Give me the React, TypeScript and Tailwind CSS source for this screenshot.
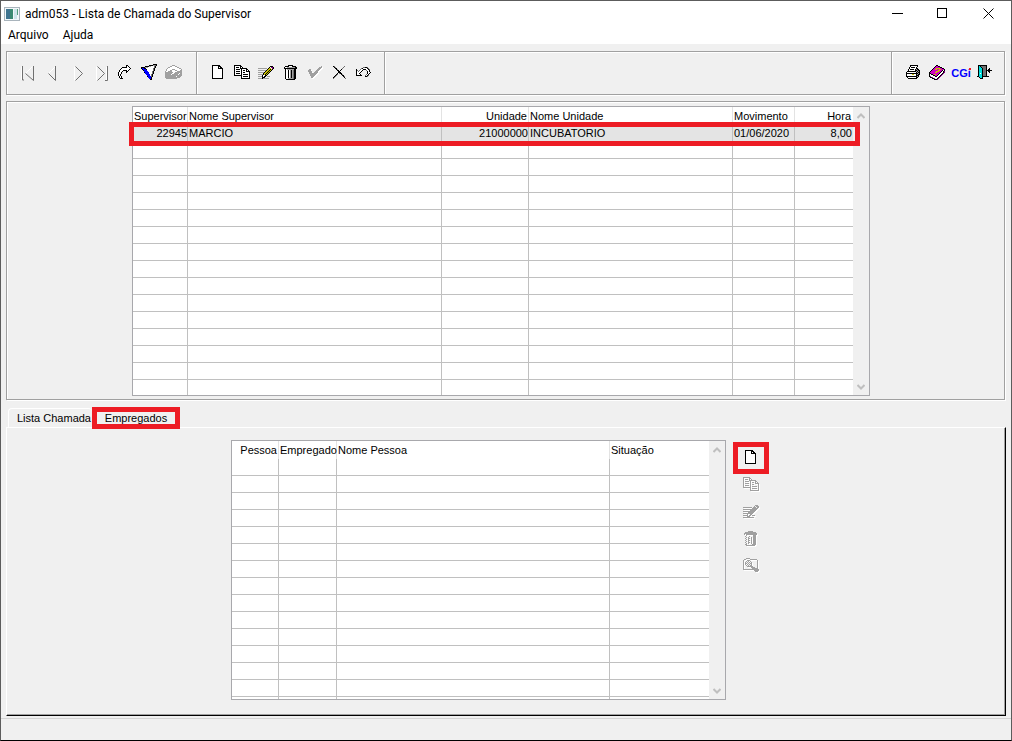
import type { ReactNode } from 'react'

const palette: Record<string, string> = {
  k: '#000000',
  w: '#ffffff',
  a: '#a0a0a0',
  g: '#707070',
  b: '#0000ff',
  y: '#c8c000',
  p: '#800080',
  m: '#d000c0',
  c: '#00e0e0'
}

const pageIcon = [
  'kkkkkkkk...',
  'kwwwwwkkk..',
  'kwwwwwkwkk.',
  'kwwwwwkkkkk',
  'kwwwwwwwwwk',
  'kwwwwwwwwwk',
  'kwwwwwwwwwk',
  'kwwwwwwwwwk',
  'kwwwwwwwwwk',
  'kwwwwwwwwwk',
  'kwwwwwwwwwk',
  'kwwwwwwwwwk',
  'kwwwwwwwwwk',
  'kkkkkkkkkkk'
]

const copyIcon = [
  'kkkkkkk.........',
  'kwwwwwkk........',
  'kwkkkwkwk.......',
  'kwwwwwkkkkkkk...',
  'kwkkkkwkwwwwkk..',
  'kwwwwwwkwkkwkwk.',
  'kwkkkkwkwwwwkkkk',
  'kwwwwwwkwkkwwwwk',
  'kwkkkkwkwwwwwwwk',
  'kwwwwwwkwkkkkkwk',
  'kkkkkkkkwwwwwwwk',
  '.......kwkkkkkwk',
  '.......kwwwwwwwk',
  '.......kkkkkkkkk'
]

const editIcon = [
  '............kkk.',
  '...........kwppk',
  'aaaaaaaaa.kyywpk',
  '.........kyykyk.',
  'aaaaaaaakyykyk..',
  '.......kyykyk...',
  'aaaaaakyykyk....',
  '.....kyykyk.....',
  'aaaaakykyk......',
  '....kwwkk.......',
  'aaaakwkk.aaa....',
  '....kkk.........',
  'aaaakaaaaaa.....'
]

const trashIcon = [
  '....kkkkk....',
  '.kkkkwwwkkkk.',
  'kwwaaaaaaaakk',
  'kkkkkkkkkkkkk',
  '.kwaaaaaaakk.',
  '.kwwkwakagkk.',
  '.kwwkwakagkk.',
  '.kwwkwakagkk.',
  '.kwwkwakagkk.',
  '.kwwkwakagkk.',
  '.kwwkwakagkk.',
  '.kwwkwakagkk.',
  '.kwwkwakagkk.',
  '.kwwaaaaagkk.',
  '..kkkkkkkkk..'
]

const trashOffIcon = [
  '....aaaaa....',
  '.aaaaaaaaaaa.',
  'aaaaaaaaaaaaa',
  'a.aaaaaaaaaaa',
  '..awwwwwwaaa.',
  '.a.wwawwwaaa.',
  '..awawwawaaa.',
  '.a.waawawaaa.',
  '..awawwawaaa.',
  '.a.waawawaaa.',
  '..awawwawaaa.',
  '.a.waawawaaa.',
  '..awawwawaaa.',
  '.aawwwwwaaaa.',
  '..aaaaaaaaa..'
]

const redoIcon = [
  '........kk...',
  '........kwk..',
  '....kkkkkwwk.',
  '...kwwwwwwwwk',
  '..kwwwwwwwwk.',
  '.kwwwkkkkwk..',
  '.kwwk...kk...',
  'kwwk....k....',
  'kwwk.........',
  'kwk..........',
  'kwk..........',
  '.kwk.........',
  '.kwk.........',
  '..kkk........'
]

const filterIcon = [
  '............kkkk',
  '........kkkkaagk',
  '....kkkkaawwwgk.',
  'kkkkaaawwwwwwgk.',
  'kbbkkwwwwwwwgk..',
  '.kbbbkwwwwwwgk..',
  '..kbbbwwwwwwgk..',
  '...bbbbwwwwgk...',
  '...kbbbbwwwgk...',
  '....bbbbwwwgk...',
  '.....bbbbwgk....',
  '......bbbwgk....',
  '......kbbbgk....',
  '.......bbbk.....',
  '........bbk.....',
  '.........kk.....'
]

const boxIcon = [
  '.......aaa.......',
  '.....aawwwaa.....',
  '...aawwwwwwwaa...',
  '..awwwwwwwwwwwaa.',
  '.awwwwwaaawwwwwwa',
  '.awwwaawwwaawwwaa',
  'awwaaaawwwwwaaaaa',
  'aaaaaaaawwaaaaaaa',
  'aaaaaaawwaaaaawaa',
  'aaaaaawaaaaaawaaa',
  'aaaaaaaaaaaaaaaaa',
  'aaaaaaaaaaawaaaa.',
  'aaaaaaaaaaaaaaa..',
  '.aaaaaaaaaaa.....'
]

const checkIcon = [
  '.............a',
  '...........aaa',
  '..........aaa.',
  '.aa......aaa..',
  'aaa.....aaa...',
  'aaaa...aaa....',
  '.aaa..aaaa....',
  '.aaaaaaaa.....',
  '..aaaaaa......',
  '..aaaaa.......',
  '...aaa........',
  '...aa.........'
]

const cancelIcon = [
  'kg.........g.',
  '.kg.......g..',
  '..kk.....g...',
  '...kg...k....',
  '....kk.k.....',
  '.....kk......',
  '.....kkk.....',
  '....k.gkk....',
  '...kg...kg...',
  '..kg.....kk..',
  '.kg.......kg.',
  'kg.........k.',
  'g...........g'
]

const undoIcon = [
  '.......ggkkg...',
  '.....gkwwwwkg..',
  'k...gwwkkkwwkg.',
  'kg.gwwk...gwwk.',
  'kwgwwk.....kwk.',
  'kwwwk......kwwk',
  'kwwk.......kwk.',
  'kwwwk.....gwk..',
  'kkkkkk...gwkg..',
  '.........kkg...'
]

const printIcon = [
  '....kkkkkkkk..',
  '....kwwwwwwk..',
  '...kwkkkkwk...',
  '...kwwwwwwkk..',
  '..kwkkkkwkakk.',
  '..kwwwwwwkkakk',
  '.kkkkkkkkkakak',
  'kwwwwwwwwwkakk',
  'kkkkkkkkkkkkak',
  'kwwwwwyywwkakk',
  'kwwwwwwwwwkkk.',
  'kkkkkkkkkkkak.',
  '.kwwwwwwwwkk..',
  '..kkkkkkkkk...'
]

const bookIcon = [
  '.......kk.......',
  '......kmmkk.....',
  '.....kmmmmmkk...',
  '....kmmyyyymmkk.',
  '...kmmyymmyymmmk',
  '..kmmmmmmyymmkwk',
  '.kmmmmmyyymmkwkp',
  'kmmmmmyymmmkwwkp',
  'kkmmmmmmmmkwwkp.',
  'kwkkmyymmkwwkp..',
  'kwwwkkmmkwwkp...',
  'kpwwwwkkwwkp....',
  '.kkpwwwwwkp.....',
  '...kkpwwkp......',
  '.....kkkp.......'
]

const exitIcon = [
  '.kkkkkkkkk.....',
  '.kckgggggk.....',
  '.kcckggggk.....',
  '.kccckgggk..k..',
  '.kccckgggk.kk..',
  '.kccckgggkkkkkk',
  '.kccckgggk.kk..',
  '.kccckgggk..k..',
  '.kcwckgggk.....',
  '.kccckgggk.....',
  '.kccckgggk.....',
  'kkccckkkkkkk...',
  '..kcck.........',
  '...kkk.........'
]

const searchIcon = [
  '...kkkk.........',
  '.kk....kkkkkkk..',
  'k...kkk.......k.',
  'k..k.k.k......k.',
  'k.k.k.k.k.....k.',
  'k.kk.k.kk.....k.',
  'k.k.k.k.k.....k.',
  'k..k.k.kk.....k.',
  'k...kkkkkk....k.',
  'k.......kkkk..k.',
  'k........kkkkkk.',
  'kkkkkkkkkkkkkkkk',
  '...........kkkkk',
  '............kkk.'
]

interface PixelIconProps {
  rows: string[]
  disabled?: boolean
}

const PixelIcon = ({ rows, disabled = false }: PixelIconProps) => {
  const width = rows[0].length
  const pixels = rows.flatMap((row, y) =>
    row.split('').map((code, x) => ({ code, x, y }))
  ).filter(({ code }) => code !== '.' && !(disabled && code === 'w'))

  return (
    <svg
      width={width + 1}
      height={rows.length + 1}
      viewBox={`0 0 ${width + 1} ${rows.length + 1}`}
      shapeRendering="crispEdges"
      aria-hidden="true"
    >
      {disabled && pixels.map(({ x, y }) => (
        <rect key={`s${x}-${y}`} x={x + 1} y={y + 1} width="1" height="1" fill="#ffffff" />
      ))}
      {pixels.map(({ code, x, y }) => (
        <rect
          key={`${x}-${y}`}
          x={x}
          y={y}
          width="1"
          height="1"
          fill={disabled ? '#a0a0a0' : palette[code]}
        />
      ))}
    </svg>
  )
}

const NavIcon = ({ light, dark }: { light: string, dark: string }) => (
  <svg width="24" height="24" viewBox="0 0 24 24" fill="none" aria-hidden="true">
    <path d={light} stroke="#ffffff" />
    <path d={dark} stroke="#707070" />
  </svg>
)

interface Tool {
  label: string
  icon: ReactNode
}

const recordTools: Tool[] = [
  { label: 'Primeiro', icon: <NavIcon light="M5.5 5.5V19M16.5 5.5L9.5 12.5" dark="M6.5 5V19H8M9.5 12.5L17.5 19.5V5" /> },
  { label: 'Anterior', icon: <NavIcon light="M15.5 5.5L8.5 12.5" dark="M8.5 12.5L15.5 19.5V5" /> },
  { label: 'Próximo', icon: <NavIcon light="M9.5 19.5V5.5" dark="M10.5 5.5L17.5 12.5L10.5 19.5" /> },
  { label: 'Último', icon: <NavIcon light="M7.5 19.5V5.5M17.5 6V19" dark="M8.5 5.5L15.5 12.5L8.5 19.5M18.5 5V19.5H16" /> },
  { label: 'Ir para', icon: <PixelIcon rows={redoIcon} /> },
  { label: 'Filtro', icon: <PixelIcon rows={filterIcon} /> },
  { label: 'Pesquisa', icon: <PixelIcon rows={boxIcon} /> }
]

const editTools: Tool[] = [
  { label: 'Incluir', icon: <PixelIcon rows={pageIcon} /> },
  { label: 'Copiar', icon: <PixelIcon rows={copyIcon} /> },
  { label: 'Modificar', icon: <PixelIcon rows={editIcon} /> },
  { label: 'Eliminar', icon: <PixelIcon rows={trashIcon} /> },
  { label: 'Confirmar', icon: <PixelIcon rows={checkIcon} disabled /> },
  { label: 'Cancelar', icon: <PixelIcon rows={cancelIcon} /> },
  { label: 'Desfazer', icon: <PixelIcon rows={undoIcon} /> }
]

const systemTools: Tool[] = [
  { label: 'Imprimir', icon: <PixelIcon rows={printIcon} /> },
  { label: 'Manual', icon: <PixelIcon rows={bookIcon} /> },
  {
    label: 'CGi',
    icon: (
      <span className="relative text-[11px] font-bold leading-4 text-[#0000ff]">
        CGi
        <span className="absolute right-0 top-[3px] size-[2px] bg-[#ed1c24]" />
      </span>
    )
  },
  { label: 'Sair', icon: <PixelIcon rows={exitIcon} /> }
]

const sideTools: Tool[] = [
  { label: 'Incluir empregado', icon: <PixelIcon rows={pageIcon} /> },
  { label: 'Copiar empregado', icon: <PixelIcon rows={copyIcon} disabled /> },
  { label: 'Modificar empregado', icon: <PixelIcon rows={editIcon} disabled /> },
  { label: 'Eliminar empregado', icon: <PixelIcon rows={trashOffIcon} disabled /> },
  { label: 'Consultar empregado', icon: <PixelIcon rows={searchIcon} disabled /> }
]

const ToolGroup = ({ tools, className }: { tools: Tool[], className: string }) => (
  <div className={`flex items-center justify-between border-[#a0a0a0] pb-px ${className}`}>
    {tools.map((tool) => (
      <button
        key={tool.label}
        type="button"
        aria-label={tool.label}
        className="flex size-6 items-center justify-center"
      >
        {tool.icon}
      </button>
    ))}
  </div>
)

interface Column {
  label: string
  width: string
  right?: boolean
}

const supervisorColumns: Column[] = [
  { label: 'Supervisor', width: 'w-[55px]', right: true },
  { label: 'Nome Supervisor', width: 'w-[254px]' },
  { label: 'Unidade', width: 'w-[87px]', right: true },
  { label: 'Nome Unidade', width: 'w-[204px]' },
  { label: 'Movimento', width: 'w-[62px]' },
  { label: 'Hora', width: 'w-[58px]', right: true }
]

const employeeColumns: Column[] = [
  { label: 'Pessoa', width: 'w-[47px]', right: true },
  { label: 'Empregado', width: 'w-[58px]' },
  { label: 'Nome Pessoa', width: 'w-[273px]' },
  { label: 'Situação', width: 'w-[99px]' }
]

interface GridProps {
  label: string
  columns: Column[]
  rows: string[][]
  rowCount: number
}

const Grid = ({ label, columns, rows, rowCount }: GridProps) => (
  <div className="flex h-full overflow-hidden border border-[#a8a8ac] bg-white">
    <div className="min-w-0 flex-1">
      <table aria-label={label} className="w-full table-fixed border-separate border-spacing-0">
        <thead>
          <tr>
            {columns.map((column) => (
              <th
                key={column.label}
                className={`h-[18px] whitespace-nowrap border-r border-[#e3e3e3] p-0 pl-px font-normal leading-[18px] last:border-r-0 last:pr-[2px] ${column.width} ${column.right ? 'pr-px text-right' : 'text-left'}`}
              >
                {column.label}
              </th>
            ))}
          </tr>
        </thead>
        <tbody>
          {Array.from({ length: rowCount }, (_, index) => (
            <tr key={index} className={rows[index] ? 'bg-[#e4e4e4]' : ''}>
              {columns.map((column, cell) => (
                <td
                  key={column.label}
                  className={`h-[17px] whitespace-nowrap border-b border-r border-[#c0c0c0] p-0 pl-px leading-4 last:border-r-0 last:pr-px ${column.right ? 'text-right' : 'text-left'}`}
                >
                  {rows[index]?.[cell]}
                </td>
              ))}
            </tr>
          ))}
        </tbody>
      </table>
    </div>
    <div className="flex w-4 shrink-0 flex-col items-center justify-between bg-[#f0f0f0] pb-[5px] pt-[6px]">
      <button type="button" aria-label="Rolar para cima">
        <svg width="8" height="6" viewBox="0 0 8 6" fill="none" stroke="#bfbfbf" strokeWidth="2">
          <path d="M0.5 5L4 1.5L7.5 5" />
        </svg>
      </button>
      <button type="button" aria-label="Rolar para baixo">
        <svg width="8" height="6" viewBox="0 0 8 6" fill="none" stroke="#bfbfbf" strokeWidth="2">
          <path d="M0.5 1L4 4.5L7.5 1" />
        </svg>
      </button>
    </div>
  </div>
)

export default function App () {
  return (
    <main className="flex min-h-screen flex-col border border-b-black border-[#5c5c5c] bg-[#f0f0f0] font-['Liberation_Sans',Arial,sans-serif] text-[11px] text-black">
      <header className="bg-white font-['Roboto','Open_Sans',sans-serif] text-[12px]">
        <div className="flex h-[25px] items-center pl-[3px]">
          <svg width="16" height="14" viewBox="0 0 16 14" aria-hidden="true">
            <rect x="0.5" y="0.5" width="15" height="13" fill="#f4f8fa" stroke="#a9b4bc" />
            <rect x="2" y="2" width="7" height="10" fill="#3c8a72" />
            <rect x="2" y="2" width="4" height="10" fill="#3f7590" />
            <rect x="10" y="2" width="3" height="10" fill="#cfe6ea" />
            <rect x="13" y="2" width="1" height="6" fill="#58a080" />
          </svg>
          <h1 className="ml-[5px] flex-1 whitespace-nowrap">adm053 - Lista de Chamada do Supervisor</h1>
          <button type="button" aria-label="Minimizar" className="flex h-full w-[46px] items-center justify-center">
            <svg width="11" height="11" viewBox="0 0 11 11" stroke="#000000">
              <path d="M0 5.5H11" />
            </svg>
          </button>
          <button type="button" aria-label="Maximizar" className="flex h-full w-[45px] items-center justify-center">
            <svg width="11" height="11" viewBox="0 0 11 11" fill="none" stroke="#000000">
              <rect x="0.5" y="0.5" width="9" height="9" />
            </svg>
          </button>
          <button type="button" aria-label="Fechar" className="flex h-full w-[46px] items-center justify-center">
            <svg width="11" height="11" viewBox="0 0 11 11" stroke="#000000">
              <path d="M0.5 0.5L10.5 10.5M10.5 0.5L0.5 10.5" />
            </svg>
          </button>
        </div>
        <nav className="flex h-[18px] items-center gap-[14px] pl-[7px]">
          <button type="button" className="leading-4">Arquivo</button>
          <button type="button" className="leading-4">Ajuda</button>
        </nav>
      </header>

      <div className="flex flex-1 flex-col pb-[2px] pl-[5px] pr-[5px] pt-[7px]">
        <div className="mr-px flex h-11 border border-[#a0a0a0] shadow-[1px_1px_0_#ffffff,inset_1px_1px_0_#ffffff]">
          <ToolGroup tools={recordTools} className="w-[190px] border-r pl-[9px] pr-[10px] shadow-[1px_0_0_#ffffff]" />
          <ToolGroup tools={editTools} className="w-[188px] border-r pl-[9px] pr-2 shadow-[1px_0_0_#ffffff]" />
          <ToolGroup tools={systemTools} className="ml-auto border-l pl-[9px] pr-[7px] shadow-[inset_1px_0_0_#ffffff]" />
        </div>

        <section className="mr-px mt-[6px] flex justify-center border border-[#a0a0a0] pb-[3px] pr-[9px] pt-1 shadow-[1px_1px_0_#ffffff,inset_1px_1px_0_#ffffff]">
          <div className="relative h-[290px] w-[738px]">
            <Grid
              label="Supervisores"
              columns={supervisorColumns}
              rows={[['22945', 'MARCIO', '21000000', 'INCUBATORIO', '01/06/2020', '8,00']]}
              rowCount={16}
            />
            <div className="pointer-events-none absolute -left-[3px] right-[10px] top-4 h-6 border-[5px] border-[#ed1c24]" />
          </div>
        </section>

        <div role="tablist" className="mt-[7px] flex h-5 items-end pl-[2px]">
          <button
            type="button"
            role="tab"
            aria-selected="false"
            className="h-[19px] w-[84px] whitespace-nowrap rounded-t-sm border-l border-t border-white pl-2 text-left"
          >
            Lista Chamada
          </button>
          <button
            type="button"
            role="tab"
            aria-selected="true"
            className="relative z-10 -mb-[2px] h-[22px] w-[88px] border-[5px] border-[#ed1c24] leading-3"
          >
            Empregados
          </button>
        </div>

        <section className="flex flex-1 justify-center border border-b-black border-l-white border-r-black border-t-white pb-[15px] pr-3 pt-3 shadow-[inset_-1px_-1px_0_#a0a0a0]">
          <div className="h-[260px] w-[495px]">
            <Grid label="Empregados" columns={employeeColumns} rows={[]} rowCount={15} />
          </div>
          <div className="relative ml-[7px] flex h-fit flex-col pt-1">
            {sideTools.map((tool) => (
              <button
                key={tool.label}
                type="button"
                aria-label={tool.label}
                className="flex h-[27px] w-9 items-center justify-center"
              >
                {tool.icon}
              </button>
            ))}
            <div className="pointer-events-none absolute inset-x-0 top-[2px] h-8 border-[5px] border-[#ed1c24]" />
          </div>
        </section>
      </div>

      <footer className="h-[22px] border-t border-[#d4d4d4]" />
    </main>
  )
}
